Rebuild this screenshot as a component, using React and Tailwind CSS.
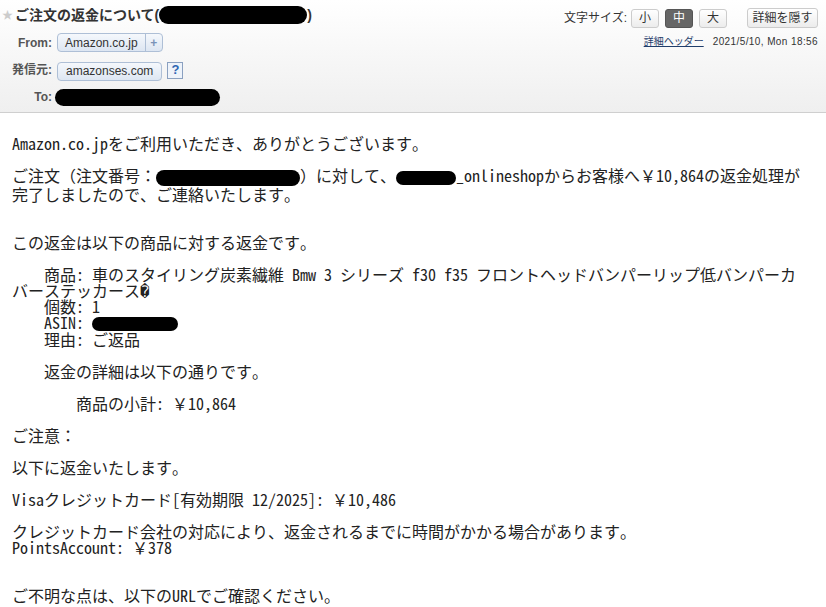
import React from 'react';

const Blot = ({ className }) => (
  <span className={`inline-block align-middle bg-black rounded-full ${className}`} />
);

const Chip = ({ children }) => (
  <span className="inline-flex h-[19px] items-center rounded-[4px] border border-[#aebfd6] bg-gradient-to-b from-[#f5f8fc] to-[#dde6f2] px-[8px] text-[12px] text-[#333]">
    {children}
  </span>
);

const SizeBtn = ({ label, active }) => (
  <span
    className={`flex h-[19px] w-[28px] items-center justify-center rounded-[3px] border text-[12px] ${
      active ? 'border-[#555] bg-[#666] text-white' : 'border-[#ccc] bg-gradient-to-b from-white to-[#ececec] text-[#333]'
    }`}
  >
    {label}
  </span>
);

const Header = () => (
  <div className="flex h-[113px] justify-between border-b border-[#cfcfcf] bg-gradient-to-b from-white to-[#efefef] font-['Liberation_Sans','Noto_Sans_CJK_JP',sans-serif]">
    <div className="flex flex-col">
      <div className="flex h-[30px] items-center pl-[2px]">
        <span className="mr-[2px] text-[11px] text-[#ccc]">★</span>
        <span className="text-[14px] font-bold text-[#333]">ご注文の返金について(</span>
        <Blot className="h-[18px] w-[148px]" />
        <span className="text-[14px] font-bold text-[#333]">)</span>
      </div>
      <div className="mt-[3px] flex items-center">
        <span className="w-[52px] text-right text-[12px] font-bold text-[#555]">From:</span>
        <span className="ml-[5px] inline-flex h-[19px] items-stretch overflow-hidden rounded-[4px] border border-[#aebfd6] bg-gradient-to-b from-[#f5f8fc] to-[#dde6f2] text-[12px] text-[#333]">
          <span className="flex items-center px-[7px]">Amazon.co.jp</span>
          <span className="flex w-[17px] items-center justify-center border-l border-[#aebfd6] font-bold text-[#7a93b8]">+</span>
        </span>
      </div>
      <div className="mt-[6px] flex items-center">
        <span className="w-[52px] text-right text-[12px] font-bold text-[#555]">発信元:</span>
        <span className="ml-[5px]">
          <Chip>amazonses.com</Chip>
        </span>
        <span className="ml-[5px] flex h-[17px] w-[16px] items-center justify-center border border-[#8aa0c0] bg-[#eef3fa] text-[13px] font-bold text-[#2f66b3]">?</span>
      </div>
      <div className="mt-[6px] flex items-center">
        <span className="w-[52px] text-right text-[12px] font-bold text-[#555]">To:</span>
        <Blot className="ml-[3px] h-[17px] w-[165px] rounded-[6px]" />
      </div>
    </div>
    <div className="flex flex-col items-end pr-[8px] pt-[8px]">
      <div className="flex items-center">
        <span className="mr-[4px] text-[12px] text-[#333]">文字サイズ:</span>
        <div className="flex gap-[6px]">
          <SizeBtn label="小" />
          <SizeBtn label="中" active />
          <SizeBtn label="大" />
        </div>
        <span className="ml-[20px] flex h-[20px] w-[71px] items-center justify-center rounded-[3px] border border-[#ccc] bg-gradient-to-b from-white to-[#ececec] text-[12px] text-[#333]">
          詳細を隠す
        </span>
      </div>
      <div className="mt-[6px] flex items-center text-[10px]">
        <span className="text-[#1f3d6b] underline">詳細ヘッダー</span>
        <span className="ml-[9px] tracking-[0.4px] text-[#333]">2021/5/10, Mon 18:56</span>
      </div>
    </div>
  </div>
);

export default function App() {
  return (
    <div className="min-h-screen w-[826px] bg-white">
      <Header />
      <div className="px-[12px] pr-[16px] pt-[22px] font-['Noto_Sans_Mono_CJK_JP','Noto_Sans_CJK_JP',monospace] text-[16px] leading-[16px] text-[#222] whitespace-pre-wrap">
        <p>Amazon.co.jpをご利用いただき、ありがとうございます。</p>
        <p className="mt-[16px]">
          ご注文（注文番号：<Blot className="h-[16px] w-[144px]" />）に対して、<Blot className="h-[14px] w-[60px]" />_onlineshopからお客様へ￥10,864の返金処理が完了しましたので、ご連絡いたします。
        </p>
        <p className="mt-[32px]">この返金は以下の商品に対する返金です。</p>
        <p className="mt-[16px]">
          {'    商品: 車のスタイリング炭素繊維 Bmw 3 シリーズ f30 f35 フロントヘッドバンパーリップ低バンパーカバーステッカース\uFFFD'}
          {'\n    個数: 1\n    ASIN: '}
          <Blot className="h-[14px] w-[86px]" />
          {'\n    理由: ご返品'}
        </p>
        <p className="mt-[16px]">{'    返金の詳細は以下の通りです。'}</p>
        <p className="mt-[16px]">{'        商品の小計: ￥10,864'}</p>
        <p className="mt-[16px]">ご注意：</p>
        <p className="mt-[16px]">以下に返金いたします。</p>
        <p className="mt-[16px]">Visaクレジットカード[有効期限 12/2025]: ￥10,486</p>
        <p className="mt-[16px]">
          {'クレジットカード会社の対応により、返金されるまでに時間がかかる場合があります。\nPointsAccount: ￥378'}
        </p>
        <p className="mt-[32px]">ご不明な点は、以下のURLでご確認ください。</p>
      </div>
    </div>
  );
}
